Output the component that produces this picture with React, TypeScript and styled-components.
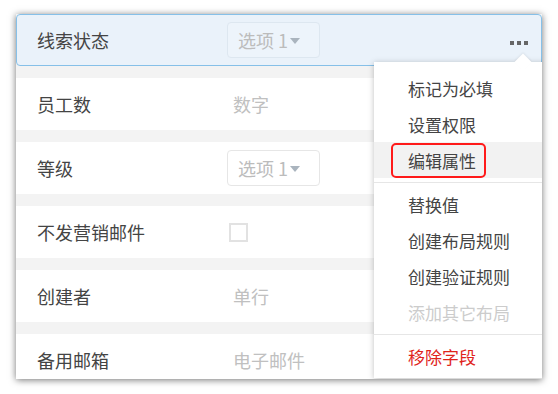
import React from 'react';
import styled, { createGlobalStyle } from 'styled-components';

const GlobalStyle = createGlobalStyle`
  html, body {
    margin: 0;
    padding: 0;
    background: #ffffff;
  }
  body {
    font-family: "Noto Sans CJK SC", "Noto Sans", sans-serif;
  }
`;

type Field = {
    label: string;
    kind: 'select' | 'text' | 'checkbox';
    value?: string;
    active?: boolean;
};

const fields: Field[] = [
    { label: '线索状态', kind: 'select', value: '选项 1', active: true },
    { label: '员工数', kind: 'text', value: '数字' },
    { label: '等级', kind: 'select', value: '选项 1' },
    { label: '不发营销邮件', kind: 'checkbox' },
    { label: '创建者', kind: 'text', value: '单行' },
    { label: '备用邮箱', kind: 'text', value: '电子邮件' },
];

type MenuItem = { text: string; tone?: 'muted' | 'danger'; hover?: boolean };

const menuGroups: MenuItem[][] = [
    [
        { text: '标记为必填' },
        { text: '设置权限' },
        { text: '编辑属性', hover: true },
    ],
    [
        { text: '替换值' },
        { text: '创建布局规则' },
        { text: '创建验证规则' },
        { text: '添加其它布局', tone: 'muted' },
    ],
    [{ text: '移除字段', tone: 'danger' }],
];

const App = () => {
    return (
        <>
            <GlobalStyle />
            <Page>
                <Panel>
                    {fields.map((f) => (
                        <Row key={f.label} $active={f.active}>
                            <Label>{f.label}</Label>
                            <Value>
                                {f.kind === 'select' && (
                                    <SelectBox $active={f.active}>
                                        {f.value}
                                        <Caret />
                                    </SelectBox>
                                )}
                                {f.kind === 'text' && <Placeholder>{f.value}</Placeholder>}
                                {f.kind === 'checkbox' && <Checkbox />}
                            </Value>
                            {f.active && (
                                <MoreButton>
                                    <Dot />
                                    <Dot />
                                    <Dot />
                                </MoreButton>
                            )}
                        </Row>
                    ))}

                    <Menu>
                        <MenuArrow />
                        {menuGroups.map((group, i) => (
                            <MenuGroup key={i} $first={i === 0}>
                                {group.map((item) => (
                                    <MenuRow key={item.text} $hover={item.hover}>
                                        <MenuText $tone={item.tone} $marked={item.hover}>
                                            {item.text}
                                        </MenuText>
                                    </MenuRow>
                                ))}
                            </MenuGroup>
                        ))}
                    </Menu>
                </Panel>
            </Page>
        </>
    );
};

export default App;

const Page = styled.div`
  width: 558px;
  height: 394px;
  box-sizing: border-box;
  padding: 14px 16px 0 16px;
  background: #ffffff;
`;

const Panel = styled.div`
  position: relative;
  width: 526px;
  height: 365px;
  overflow: hidden;
  background: #f3f3f3;
  display: flex;
  flex-direction: column;
  gap: 12px;
  box-shadow: 0 1px 7px rgba(0, 0, 0, 0.55);
`;

const Row = styled.div<{ $active?: boolean }>`
  flex: none;
  height: 52px;
  box-sizing: border-box;
  display: flex;
  align-items: center;
  padding-left: ${(p) => (p.$active ? '20px' : '21px')};
  background: ${(p) => (p.$active ? '#eaf2fa' : '#ffffff')};
  border: ${(p) => (p.$active ? '1px solid #86c0e8' : 'none')};
  border-radius: ${(p) => (p.$active ? '4px' : '0')};
`;

const Label = styled.div`
  width: 190px;
  flex: none;
  font-size: 18px;
  color: #444444;
`;

const Value = styled.div`
  flex: 1;
  display: flex;
  align-items: center;
`;

const SelectBox = styled.div<{ $active?: boolean }>`
  width: 93px;
  height: 36px;
  box-sizing: border-box;
  display: flex;
  align-items: center;
  padding-left: 10px;
  font-size: 18px;
  color: #bcbcbc;
  background: ${(p) => (p.$active ? '#edf4fb' : '#ffffff')};
  border: 1px solid ${(p) => (p.$active ? '#dde7f0' : '#e6e6e6')};
  border-radius: 4px;
`;

const Caret = styled.span`
  width: 0;
  height: 0;
  margin-left: 2px;
  margin-top: 2px;
  border-left: 5px solid transparent;
  border-right: 5px solid transparent;
  border-top: 6px solid #aab4be;
`;

const Placeholder = styled.span`
  padding-left: 6px;
  font-size: 18px;
  color: #c0c0c0;
`;

const Checkbox = styled.span`
  width: 19px;
  height: 19px;
  margin-left: 2px;
  box-sizing: border-box;
  border: 2px solid #e2e2e2;
  background: #ffffff;
`;

const MoreButton = styled.div`
  display: flex;
  gap: 3px;
  align-items: center;
  margin-right: 13px;
  margin-top: 6px;
`;

const Dot = styled.span`
  width: 4px;
  height: 4px;
  background: #666666;
`;

const Menu = styled.div`
  position: absolute;
  top: 48px;
  left: 358px;
  width: 172px;
  background: #ffffff;
  box-shadow: 0 1px 6px rgba(0, 0, 0, 0.25);
  display: flex;
  flex-direction: column;
`;

const MenuArrow = styled.span`
  position: absolute;
  top: -6px;
  right: 17px;
  width: 12px;
  height: 12px;
  background: #ffffff;
  transform: rotate(45deg);
  box-shadow: -1px -1px 2px rgba(0, 0, 0, 0.06);
`;

const MenuGroup = styled.div<{ $first?: boolean }>`
  position: relative;
  padding: ${(p) => (p.$first ? '8px 0 4px' : '3px 0 4px')};
  border-top: ${(p) => (p.$first ? 'none' : '1px solid #e6e6e6')};
`;

const MenuRow = styled.div<{ $hover?: boolean }>`
  height: 36px;
  display: flex;
  align-items: center;
  padding-left: 34px;
  background: ${(p) => (p.$hover ? '#f2f2f2' : 'transparent')};
`;

const MenuText = styled.span<{ $tone?: 'muted' | 'danger'; $marked?: boolean }>`
  font-size: 17px;
  color: ${(p) => (p.$tone === 'muted' ? '#cccccc' : p.$tone === 'danger' ? '#e0241b' : '#444444')};
  ${(p) =>
        p.$marked &&
        `
    margin-left: -17px;
    padding: 3px 8px 3px 15px;
    border: 2px solid #ff1a1a;
    border-radius: 5px;
  `}
`;
